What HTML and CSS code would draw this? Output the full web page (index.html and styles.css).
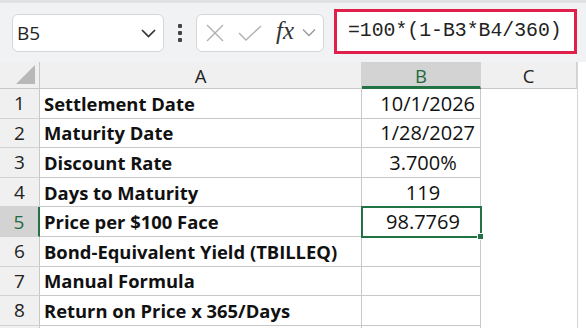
FILE: index.html
```html
<!DOCTYPE html>
<html lang="en">
<head>
  <meta charset="UTF-8" />
  <title>Sheet</title>
  <link rel="stylesheet" href="styles.css">
</head>
<body>
  <div class="formula-bar">
    <div class="name-box">
      <span>B5</span>
      <svg width="15" height="10" viewBox="0 0 15 10"><path d="M1 2l6.5 6.5L14 2" fill="none" stroke="#333" stroke-width="1.7"/></svg>
    </div>
    <div class="dots"><i></i><i></i><i></i></div>
    <div class="fx-box">
      <svg width="18" height="18" viewBox="0 0 18 18"><path d="M1 1l16 16M17 1L1 17" stroke="#b0b0b0" stroke-width="1.4"/></svg>
      <svg width="24" height="16" viewBox="0 0 24 16"><path d="M1 8l7 7L23 1" fill="none" stroke="#b0b0b0" stroke-width="1.4"/></svg>
      <span class="fx">fx</span>
      <svg width="14" height="9" viewBox="0 0 14 9"><path d="M1 1.5l6 6 6-6" fill="none" stroke="#9a9a9a" stroke-width="1.4"/></svg>
    </div>
    <div class="formula">=100*(1-B3*B4/360)</div>
  </div>

  <div class="sheet">
    <div class="corner"><span class="tri"></span></div>
    <div class="col-head">A</div>
    <div class="col-head sel">B</div>
    <div class="col-head">C</div>
    <div class="gutter"></div>

    <div class="row-head">1</div><div class="cell label">Settlement Date</div><div class="cell num right">10/1/2026</div><div class="cell blank"></div><div class="gutter"></div>
    <div class="row-head">2</div><div class="cell label">Maturity Date</div><div class="cell num right">1/28/2027</div><div class="cell blank"></div><div class="gutter"></div>
    <div class="row-head">3</div><div class="cell label">Discount Rate</div><div class="cell num">3.700%</div><div class="cell blank"></div><div class="gutter"></div>
    <div class="row-head">4</div><div class="cell label">Days to Maturity</div><div class="cell num">119</div><div class="cell blank"></div><div class="gutter"></div>
    <div class="row-head sel">5</div><div class="cell label">Price per $100 Face</div><div class="cell num active">98.7769<span class="handle"></span></div><div class="cell blank"></div><div class="gutter"></div>
    <div class="row-head">6</div><div class="cell label">Bond-Equivalent Yield (TBILLEQ)</div><div class="cell num"></div><div class="cell blank"></div><div class="gutter"></div>
    <div class="row-head">7</div><div class="cell label">Manual Formula</div><div class="cell num"></div><div class="cell blank"></div><div class="gutter"></div>
    <div class="row-head">8</div><div class="cell label">Return on Price x 365/Days</div><div class="cell num"></div><div class="cell blank"></div><div class="gutter"></div>
    <div class="row-head"></div><div class="cell label"></div><div class="cell num"></div><div class="cell blank"></div><div class="gutter"></div>
  </div>
</body>
</html>
```

FILE: styles.css
```css
* {
  box-sizing: border-box;
}
body {
  margin: 0;
  width: 586px;
  height: 328px;
  overflow: hidden;
  background: #fff;
  font-family: 'Open Sans', sans-serif;
}
.formula-bar {
  height: 62px;
  background: #f1f2f4;
  border-top: 3px solid #e0e1e3;
  display: flex;
  align-items: center;
  padding: 0 9px 0 12px;
}
.name-box {
  width: 152px;
  height: 38px;
  background: #fff;
  border: 1px solid #d6d6d6;
  border-radius: 6px;
  display: flex;
  align-items: center;
  justify-content: space-between;
  padding: 0 7px 0 4px;
  font-size: 19px;
  color: #222;
}
.dots {
  width: 32px;
  display: flex;
  flex-direction: column;
  align-items: center;
  gap: 3px;
}
.dots i {
  width: 4px;
  height: 4px;
  background: #444;
  border-radius: 1px;
}
.fx-box {
  width: 128px;
  height: 38px;
  background: #fff;
  border: 1px solid #d6d6d6;
  border-radius: 6px;
  display: flex;
  align-items: center;
  padding: 0 6px 0 9px;
}
.fx-box svg:nth-child(1),
.fx-box svg:nth-child(2) {
  margin-right: 14px;
}
.fx {
  font-family: 'Liberation Serif', serif;
  font-style: italic;
  font-size: 25px;
  color: #333;
  margin-right: 8px;
  margin-top: -4px;
}
.formula {
  margin-left: 10px;
  width: 243px;
  height: 45px;
  margin-top: -3px;
  border: 3px solid #e0204a;
  background: #fff;
  display: flex;
  align-items: center;
  padding-left: 11px;
  font-family: 'Liberation Mono', monospace;
  font-size: 19.8px;
  color: #222;
}
.sheet {
  height: 266px;
  overflow: hidden;
  display: grid;
  grid-template-columns: 40px 322px 119px 96px 1fr;
  grid-template-rows: 27px repeat(9, 29.6px);
}
.corner {
  background: #f0f0f0;
  border-right: 1px solid #c8c8c8;
  border-bottom: 1px solid #c8c8c8;
  position: relative;
}
.tri {
  position: absolute;
  right: 4px;
  bottom: 4px;
  width: 0;
  height: 0;
  border-left: 19px solid transparent;
  border-bottom: 19px solid #b8b8b8;
}
.col-head {
  background: #f0f0f0;
  border-right: 1px solid #d2d2d2;
  border-bottom: 1px solid #c8c8c8;
  display: flex;
  align-items: center;
  justify-content: center;
  font-size: 18.5px;
  color: #222;
}
.col-head.sel {
  background: #d3d3d3;
  color: #1e6b3f;
  border-bottom: 3px solid #217346;
  padding-top: 2px;
}
.gutter {
  background: #fff;
  border-left: 1px solid #d6d6d6;
}
.row-head {
  background: #f0f0f0;
  border-right: 1px solid #c8c8c8;
  border-bottom: 1px solid #d2d2d2;
  display: flex;
  align-items: center;
  justify-content: center;
  font-size: 19px;
  color: #222;
}
.row-head.sel {
  background: #d3d3d3;
  color: #1e6b3f;
  border-right: 2px solid #217346;
}
.cell {
  border-right: 1px solid #c8c8c8;
  border-bottom: 1px solid #c8c8c8;
  display: flex;
  align-items: center;
  color: #111;
  white-space: nowrap;
}
.label {
  font-weight: bold;
  font-size: 18.4px;
  padding-left: 4px;
}
.num {
  justify-content: center;
  padding-left: 4px;
  font-size: 20px;
}
.num.right {
  justify-content: flex-end;
  padding-right: 5px;
}
.blank {
  border: none;
}
.active {
  position: relative;
  outline: 2px solid #217346;
  outline-offset: -1px;
}
.handle {
  position: absolute;
  right: -4px;
  bottom: -4px;
  width: 7px;
  height: 7px;
  background: #217346;
  border: 1px solid #fff;
}
```
